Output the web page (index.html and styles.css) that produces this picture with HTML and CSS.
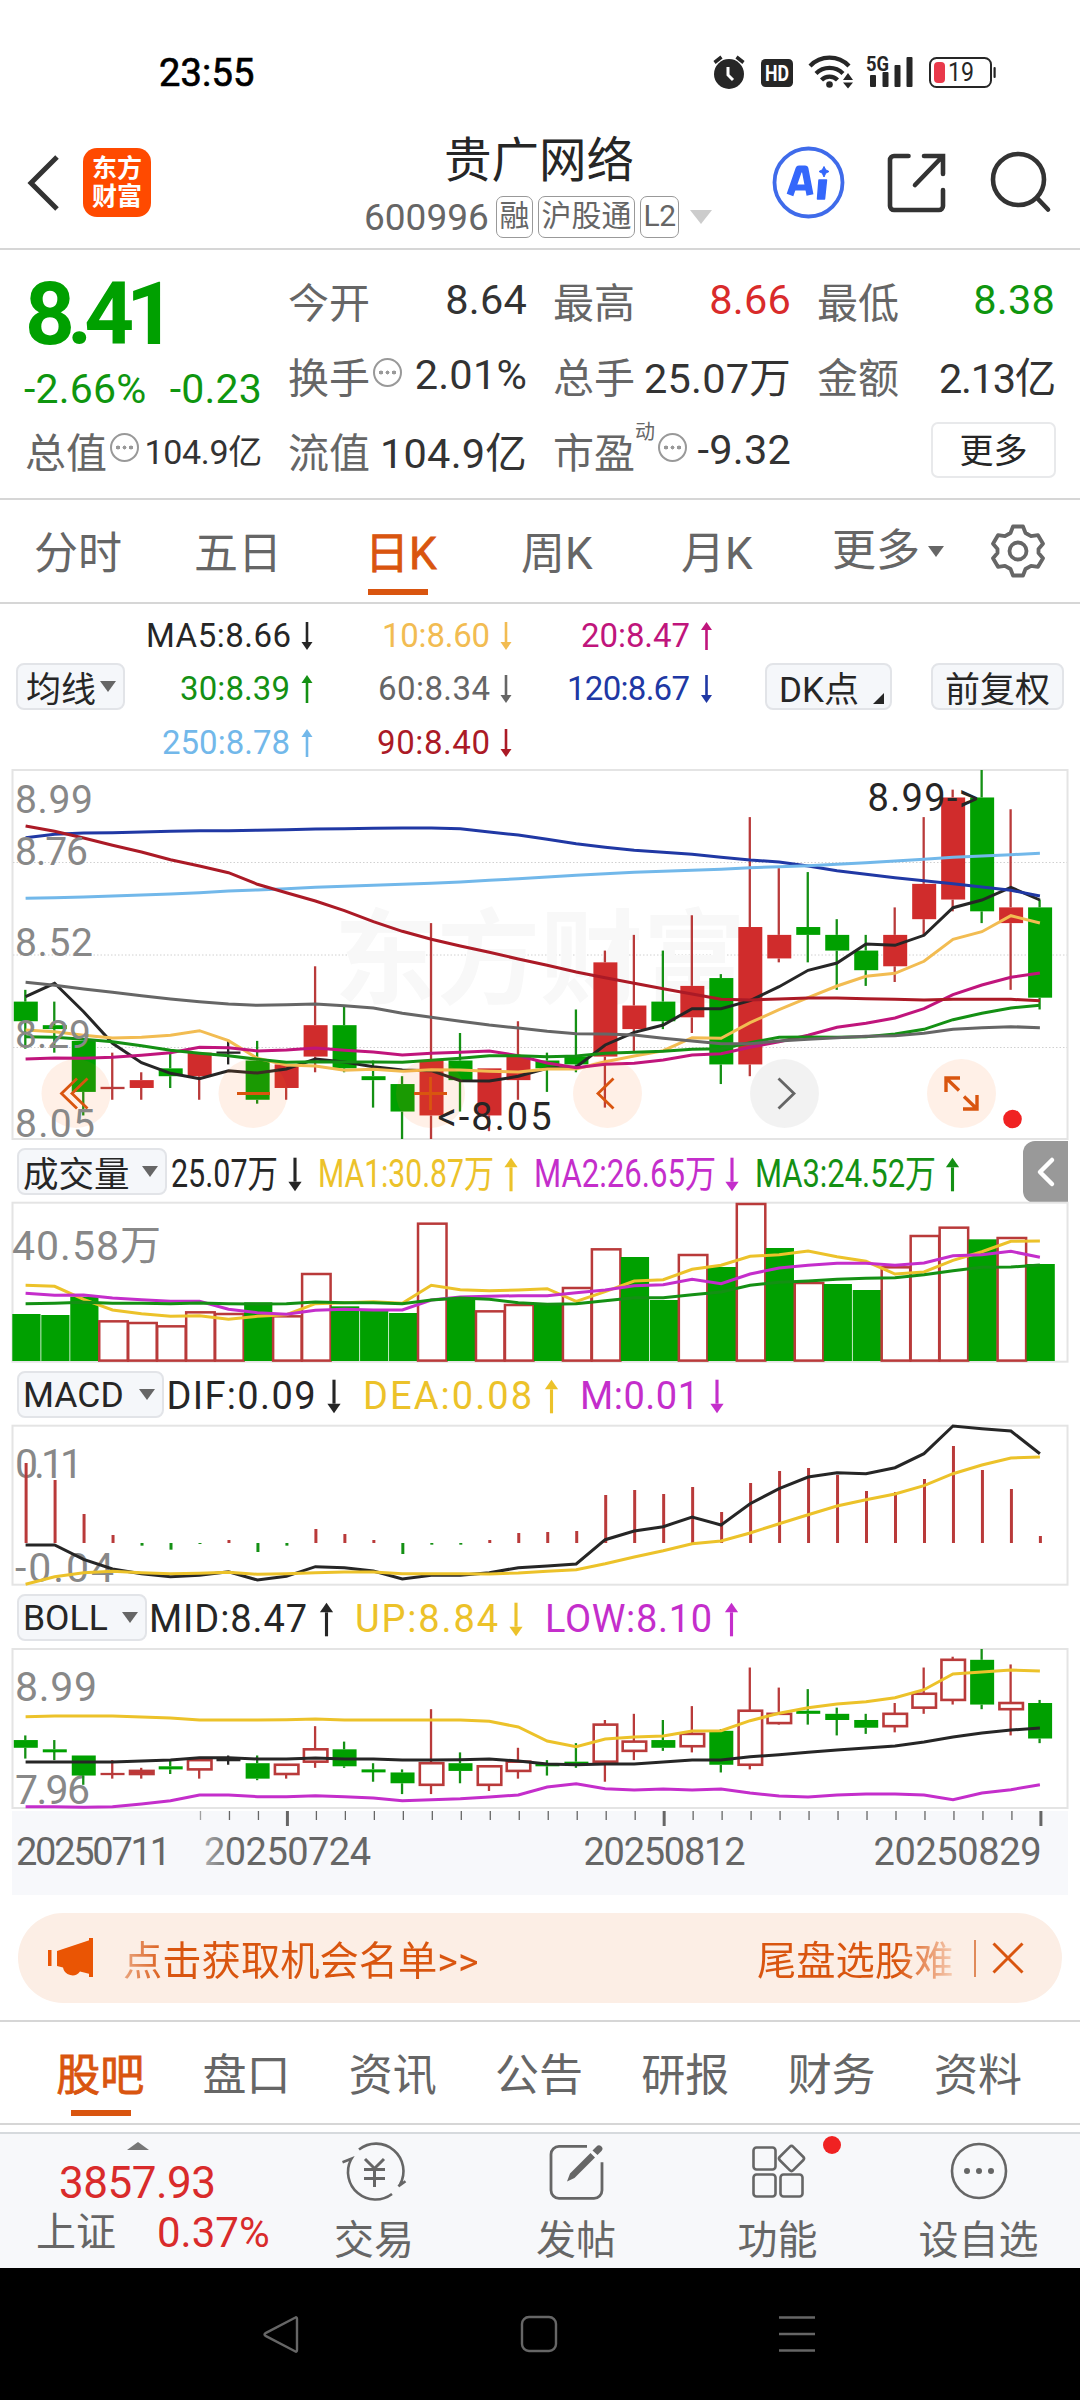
FILE: index.html
```html
<!DOCTYPE html>
<html lang="zh-CN">
<head>
<meta charset="utf-8">
<title>贵广网络 600996</title>
<link rel="stylesheet" href="styles.css">
</head>
<body>
<div class="statusbar">
  <span class="clock">23:55</span>
  <svg class="status-icons" width="290" height="44" viewBox="706 50 290 44">
    <g fill="#262626">
      <circle cx="729" cy="74" r="15"/>
      <path d="M714.500 62.500l7-5.500M743.500 62.500l-7-5.500" stroke="#262626" stroke-width="3.500"/>
      <path d="M728 67v8l5 5" fill="none" stroke="#fff" stroke-width="3"/>
      <rect x="761" y="59" width="32" height="28" rx="4.500"/>
      <text x="777" y="81" class="hd" text-anchor="middle" textLength="24" lengthAdjust="spacingAndGlyphs">HD</text>
      <g fill="none" stroke="#262626" stroke-width="4.200">
        <path d="M810 66a27 27 0 0 1 39 0"/><path d="M816 73.500a19 19 0 0 1 27 0"/><path d="M821.500 80a11 11 0 0 1 16 0"/>
      </g>
      <circle cx="829.500" cy="84.500" r="3.300"/>
      <path d="M843 80l5-7 5 7zM843 82.500h10l-5 6z"/>
      <text x="866" y="71" class="net" textLength="23" lengthAdjust="spacingAndGlyphs">5G</text>
      <rect x="870" y="75" width="6" height="12" rx="1"/><rect x="882.500" y="72" width="6" height="15" rx="1"/>
      <rect x="894.500" y="65" width="6" height="22" rx="1"/><rect x="906.500" y="57" width="6" height="30" rx="1"/>
      <rect x="930" y="58" width="61" height="29" rx="6.500" fill="none" stroke="#262626" stroke-width="2"/>
      <rect x="934" y="62" width="11" height="21" rx="4" fill="#e9394b"/>
      <rect x="993.500" y="67" width="2.200" height="11" rx="1"/>
      <text x="948" y="81" class="bat" textLength="26" lengthAdjust="spacingAndGlyphs">19</text>
    </g>
  </svg>
</div>

<header class="header">
  <svg class="back" width="34" height="60" viewBox="0 0 34 60"><path d="M30 4L4 30l26 26" fill="none" stroke="#333" stroke-width="5"/></svg>
  <div class="logo"><span>东方</span><span>财富</span></div>
  <div class="title">
    <h1>贵广网络</h1>
    <div class="code"><span class="num">600996</span><span class="tag t1">融</span><span class="tag t3">沪股通</span><span class="tag l2">L2</span><i class="caret"></i></div>
  </div>
  <svg class="head-icons" width="284" height="80" viewBox="770 143 284 80" fill="none">
    <circle cx="808.500" cy="182.500" r="34" stroke="#3f6bea" stroke-width="3.800"/>
    <path d="M790 195L799 169h6l5 26" stroke="#3467fb" stroke-width="7" stroke-linejoin="round"/><path d="M794 187.500h14" stroke="#3467fb" stroke-width="6"/>
    <path d="M819 180h7.500l-2 19h-7z" fill="#3467fb" stroke="#3467fb" stroke-width="1.500" stroke-linejoin="round"/>
    <path d="M824 166.500l1.700 3.300 3.300 1.700-3.300 1.700-1.700 3.800-1.700-3.800-3.300-1.700 3.300-1.700z" fill="#3467fb" stroke="#3467fb"/>
    <g stroke="#333" stroke-width="4.600" stroke-linecap="round">
      <path d="M908.500 156H894a4 4 0 0 0-4 4v46a4 4 0 0 0 4 4h45a4 4 0 0 0 4-4v-16"/>
      <path d="M924 156h19v18M942 157l-27 28"/>
      <circle cx="1018.500" cy="179.500" r="25.500"/><path d="M1038 199l10 10.500"/>
    </g>
  </svg>
</header>

<section class="quote">
  <div class="last">
    <div class="price">8.41</div>
    <div class="change"><span>-2.66%</span><span>-0.23</span></div>
  </div>
  <div class="cell"><span class="k">今开</span><b>8.64</b></div>
  <div class="cell"><span class="k">最高</span><b class="up">8.66</b></div>
  <div class="cell"><span class="k">最低</span><b class="down">8.38</b></div>
  <div class="cell"><span class="k">换手<i class="dots"></i></span><b>2.01%</b></div>
  <div class="cell"><span class="k">总手</span><b>25.07万</b></div>
  <div class="cell"><span class="k">金额</span><b class="tight">2.13亿</b></div>
  <div class="cell small"><span class="k">总值<i class="dots"></i></span><b>104.9亿</b></div>
  <div class="cell"><span class="k">流值</span><b>104.9亿</b></div>
  <div class="cell"><span class="k">市盈<sup>动</sup><i class="dots"></i></span><b>-9.32</b></div>
  <div class="cell end"><span class="more-btn">更多</span></div>
</section>

<nav class="periods">
  <span class="p1">分时</span><span class="p2">五日</span><span class="p3 on">日K</span><span class="p4">周K</span><span class="p5">月K</span><span class="p6">更多<i class="caret dark"></i></span>
  <svg class="gear" width="54" height="56" viewBox="-27 -28 54 56" fill="none" stroke="#666" stroke-width="3.800" stroke-linejoin="round">
    <path d="M-5-24.500h10l2.500 6.500 5.500 3.200 7-1 5 8.600-4.500 5.200v4l4.500 5.200-5 8.600-7-1L7.500 18 5 24.500H-5L-7.500 18l-5.500-3.200-7 1-5-8.600 4.500-5.200v-4L-25-7.200l5-8.600 7 1 5.500-3.200z"/><circle r="8.500"/>
  </svg>
</nav>

<section class="legend">
  <span class="chip avg">均线<i class="caret dark"></i></span>
  <svg class="ma-legend" width="580" height="165" viewBox="140 604 580 165">
    <defs>
      <g id="dn"><path d="M0-14v20" stroke="currentColor" stroke-width="2.600"/><path d="M-5.500 6h11L0 14z" fill="currentColor"/></g>
      <g id="ua"><path d="M0 14V-6" stroke="currentColor" stroke-width="2.600"/><path d="M-5.500-6h11L0-14z" fill="currentColor"/></g>
    </defs>
    <g class="t33">
      <g class="c-ink"><text x="146" y="647" textLength="145">MA5:8.66</text><use href="#dn" x="307" y="636"/></g>
      <g class="c-orange"><text x="382" y="647" textLength="108">10:8.60</text><use href="#dn" x="506" y="636"/></g>
      <g class="c-pink"><text x="581" y="647" textLength="109">20:8.47</text><use href="#ua" x="706.500" y="636"/></g>
      <g class="c-green"><text x="180" y="700" textLength="110">30:8.39</text><use href="#ua" x="307" y="689"/></g>
      <g class="c-gray"><text x="378" y="700" textLength="112">60:8.34</text><use href="#dn" x="506" y="689"/></g>
      <g class="c-blue"><text x="567" y="700" textLength="123">120:8.67</text><use href="#dn" x="706.500" y="689"/></g>
      <g class="c-sky"><text x="162" y="754" textLength="128">250:8.78</text><use href="#ua" x="307" y="743"/></g>
      <g class="c-red"><text x="377" y="754" textLength="113">90:8.40</text><use href="#dn" x="506" y="743"/></g>
    </g>
  </svg>
  <span class="chip dk">DK点<i class="corner"></i></span>
  <span class="chip">前复权</span>
</section>

<svg class="plot" width="1080" height="371" viewBox="0 9 1080 371">
  <rect x="12.500" y="10" width="1055" height="369" class="frame"/>
  <path d="M13 102.500H1067M13 195H1067M13 287.500H1067" class="grid"/>
  <text x="334" y="236" class="wm" textLength="412">东方财富</text>
  <g id="k"></g>
  <g class="fab">
    <circle cx="76" cy="333.500" r="34.500"/><circle cx="253" cy="333.500" r="34.500"/><circle cx="430.500" cy="333.500" r="34.500"/>
    <circle cx="607.500" cy="333.500" r="34.500"/><circle cx="784.500" cy="333.500" r="34.500" class="g"/><circle cx="961.500" cy="333.500" r="34.500"/>
  </g>
  <g fill="none" stroke="#d9550f" stroke-width="2.800">
    <path d="M77 318.500L61.500 333.500l15.500 15M87.500 318.500L72 333.500l15.500 15M237 333.500h33M414 333.500h33M430.500 317v33M613.500 318.500L598 333.500l15.500 15"/>
    <path d="M778.500 318.500L794 333.500l-15.500 15" stroke="#666"/>
    <path d="M946 332v-14h14M946 318l13 12.500M963 349h14v-14M977 349l-13-12.500" stroke-width="3.400"/>
  </g>
  <circle cx="1012.500" cy="359" r="9.300" fill="#f02222"/>
  <g class="axis">
    <text x="15" y="53" textLength="78">8.99</text><text x="15" y="104.500" textLength="73">8.76</text>
    <text x="15" y="195.500" textLength="78">8.52</text><text x="15" y="288" textLength="76">8.29</text><text x="15" y="376.500" textLength="80">8.05</text>
  </g>
  <g class="t38 c-ink"><text x="867.500" y="51" textLength="111">8.99-&gt;</text><text x="437.500" y="370" textLength="114">&lt;-8.05</text></g>
</svg>

<div class="ph">
  <span class="chip w1">成交量<i class="caret dark"></i></span>
  <svg width="854" height="62" viewBox="169 1140 854 62">
    <g class="t38">
      <g class="c-ink"><text x="171" y="1187" textLength="107" lengthAdjust="spacingAndGlyphs">25.07万</text><use href="#dn" transform="translate(295 1174.500) scale(1.200)"/></g>
      <g class="c-yellow"><text x="318" y="1187" textLength="176" lengthAdjust="spacingAndGlyphs">MA1:30.87万</text><use href="#ua" transform="translate(511 1174.500) scale(1.200)"/></g>
      <g class="c-violet"><text x="534" y="1187" textLength="182" lengthAdjust="spacingAndGlyphs">MA2:26.65万</text><use href="#dn" transform="translate(732 1174.500) scale(1.200)"/></g>
      <g class="c-green"><text x="755" y="1187" textLength="181" lengthAdjust="spacingAndGlyphs">MA3:24.52万</text><use href="#ua" transform="translate(952.500 1174.500) scale(1.200)"/></g>
    </g>
  </svg>
  <div class="drawer"><svg width="20" height="32" viewBox="0 0 20 32"><path d="M16 4L4 16l12 12" fill="none" stroke="#fff" stroke-width="4.500" stroke-linecap="round" stroke-linejoin="round"/></svg></div>
</div>
<svg class="plot" width="1080" height="161" viewBox="0 62 1080 161">
  <rect x="12.500" y="62.700" width="1055" height="159" class="frame"/>
  <g id="vol"></g>
  <text x="12" y="120" class="ax40" textLength="149">40.58万</text>
</svg>

<div class="ph">
  <span class="chip w2">MACD<i class="caret dark"></i></span>
  <svg width="857" height="62" viewBox="166 1363 857 62">
    <g class="t38">
      <g class="c-ink"><text x="166.500" y="1408.500" textLength="149">DIF:0.09</text><use href="#dn" transform="translate(334 1396.500) scale(1.200)"/></g>
      <g class="c-yellow"><text x="363" y="1408.500" textLength="169">DEA:0.08</text><use href="#ua" transform="translate(551.500 1396.500) scale(1.200)"/></g>
      <g class="c-violet"><text x="580" y="1408.500" textLength="119">M:0.01</text><use href="#dn" transform="translate(717 1396.500) scale(1.200)"/></g>
    </g>
  </svg>
</div>
<svg class="plot" width="1080" height="161" viewBox="0 285 1080 161">
  <rect x="12.500" y="285.700" width="1055" height="159" class="frame"/>
  <g class="ax40"><text x="15" y="337.500" textLength="68">0.11</text><text x="15" y="441.500" textLength="99">-0.04</text></g>
  <g id="macd"></g>
</svg>

<div class="ph">
  <span class="chip w3">BOLL<i class="caret dark"></i></span>
  <svg width="874" height="62" viewBox="149 1586 874 62">
    <g class="t38">
      <g class="c-ink"><text x="149" y="1632" textLength="158">MID:8.47</text><use href="#ua" transform="translate(326.500 1619.500) scale(1.200)"/></g>
      <g class="c-yellow"><text x="355" y="1632" textLength="143">UP:8.84</text><use href="#dn" transform="translate(516 1619.500) scale(1.200)"/></g>
      <g class="c-violet"><text x="545" y="1632" textLength="167">LOW:8.10</text><use href="#ua" transform="translate(731.500 1619.500) scale(1.200)"/></g>
    </g>
  </svg>
</div>
<svg class="plot" width="1080" height="162" viewBox="0 58 1080 162">
  <rect x="12.500" y="59" width="1055" height="159" class="frame"/>
  <g class="ax40"><text x="15" y="110.500" textLength="82">8.99</text><text x="15" y="214" textLength="75">7.96</text></g>
  <g id="boll"></g>
</svg>

<svg class="plot" width="1080" height="85" viewBox="0 0 1080 85">
  <defs>
    <linearGradient id="f" gradientUnits="userSpaceOnUse" x1="200" x2="232"><stop offset="0" stop-color="#666" stop-opacity=".45"/><stop offset="1" stop-color="#666"/></linearGradient>
  </defs>
  <rect x="12" y="1" width="1056" height="84" fill="#f7f8fb"/>
  <g id="ticks"></g>
  <g class="t38"><g class="c-gray"><text x="16" y="55" textLength="155">20250711</text><text x="204" y="55" textLength="167" fill="url(#f)">20250724</text><text x="583.500" y="55" textLength="162">20250812</text><text x="873.500" y="55" textLength="168">20250829</text></g></g>
</svg>

<div class="banner">
  <svg width="46" height="42" viewBox="48 1937 46 42" fill="#ea5504"><rect x="48" y="1950" width="3.500" height="16"/><path d="M57 1951l33-11v34l-10-2.500a9.500 9.500 0 0 1-17-4l-6-1.500z"/><rect x="89" y="1938" width="4" height="39"/></svg>
  <span class="msg">点击获取机会名单&gt;&gt;</span>
  <span class="msg tail">尾盘选股难</span>
  <i class="bar"></i>
  <svg width="32" height="32" viewBox="0 0 32 32"><path d="M1.500 1.500l29 29M30.500 1.500l-29 29" stroke="#d9550f" stroke-width="3"/></svg>
</div>

<nav class="tabs">
  <span class="on">股吧</span><span>盘口</span><span>资讯</span><span>公告</span><span>研报</span><span>财务</span><span>资料</span>
</nav>

<footer class="actions">
  <div class="index">
    <i class="tri-up"></i>
    <div class="pts">3857.93</div>
    <div class="idx"><span>上证</span><b>0.37%</b></div>
  </div>
  <div class="act">
    <svg width="70" height="60" viewBox="340 2141 70 60" fill="none" stroke="#666" stroke-width="2.600">
      <path d="M360 2149.500a27.500 27.500 0 0 1 41 35l-1.500 1.800 7-5M393 2194a27.500 27.500 0 0 1-41-34.500l.5-.8-9 3.500"/>
      <path d="M366 2159l9.500 9.500 9.500-9.500M365 2169.500h21M365 2178.500h21M375.500 2168.500v18.500" stroke-width="3"/>
    </svg><span>交易</span></div>
  <div class="act">
    <svg width="60" height="60" viewBox="547 2141 60 60" fill="none" stroke="#666" stroke-width="2.800">
      <path d="M588 2146.300h-28a8 8 0 0 0-8 8v36a8 8 0 0 0 8 8h35a8 8 0 0 0 8-8v-28"/>
      <path d="M568 2181.500l3-8 20.500-20.500 4.500 4.500-20.500 20.500zM593.500 2150.500l4-4a3.300 3.300 0 0 1 5 4.500l-4 4z" fill="#666" stroke="none"/>
    </svg><span>发帖</span></div>
  <div class="act">
    <svg width="60" height="60" viewBox="748 2141 60 60" fill="none" stroke="#666" stroke-width="2.600">
      <rect x="753.500" y="2147.500" width="22" height="22" rx="3"/><rect x="753.500" y="2174.500" width="22" height="22" rx="3"/><rect x="780.500" y="2174.500" width="22" height="22" rx="3"/>
      <rect x="782" y="2149" width="19" height="19" rx="2.500" transform="rotate(45 791.500 2158.500)"/>
    </svg><i class="badge"></i><span>功能</span></div>
  <div class="act">
    <svg width="60" height="60" viewBox="-30 -30 60 60"><circle r="27" fill="none" stroke="#666" stroke-width="2.600"/><circle cx="-12" r="3" fill="#666"/><circle r="3" fill="#666"/><circle cx="12" r="3" fill="#666"/></svg><span>设自选</span></div>
</footer>
<div class="sysnav">
  <svg width="560" height="40" viewBox="260 2314 560 40" fill="none" stroke="#666" stroke-width="2.400">
    <path d="M297 2319v31q0 2.500-2 1.300l-29-15.200q-3-1.600 0-3.200l29-15.200q2-1.200 2 1.300z" stroke-linejoin="round"/>
    <rect x="522" y="2317" width="34" height="34" rx="7"/><path d="M779 2317.500h36M779 2334h36M779 2350.500h36"/>
  </svg>
</div>
<script src="chart.js"></script>
</body>
</html>
```
FILE: styles.css
```css
* { box-sizing: border-box; }
body {
  margin: 0; width: 1080px; height: 2400px; overflow: hidden; background: #fff; color: #262626;
  font-family: Roboto, "Noto Sans CJK SC", sans-serif;
}
svg, i { display: block; flex: none; }
svg { overflow: visible; }
b, h1 { font-weight: 400; margin: 0; }
text { white-space: pre; }

.statusbar { height: 110px; padding: 50px 84px 0 159px; display: flex; justify-content: space-between; }
.clock { font-size: 38px; line-height: 46px; color: #000; letter-spacing: 0.2px; -webkit-text-stroke: 0.7px #000; }
.hd { font-size: 22px; font-weight: 700; fill: #fff; }
.net { font-size: 20px; font-weight: 700; }
.bat { font-size: 25px; }

.header { height: 140px; border-bottom: 2px solid #d6d6d6; display: flex; padding-left: 27px; }
.back { margin-top: 43px; }
.logo {
  width: 68px; height: 69px; margin: 38px 0 0 22px; border-radius: 14px; background: #ff4a00; color: #fff;
  display: flex; flex-direction: column; align-items: center; justify-content: center;
  font-size: 25px; font-weight: 700; line-height: 28px;
}
.title { width: 550px; margin-left: 114px; }
.title h1 { font-size: 47.5px; line-height: 60px; margin: 21px 0 0 79px; padding-left: 100px; width: 300px; white-space: nowrap; }
.code { display: flex; align-items: center; height: 42px; padding-left: 99px; margin-top: 5px; color: #666; }
.num { font-size: 37px; letter-spacing: 0; margin-right: 5px; width: 127px; }
.tag { height: 42px; line-height: 38px; border: 1.500px solid #999; border-radius: 7px; font-size: 30px; white-space: nowrap; display: flex; justify-content: center; flex: none; }
.t1 { width: 37px; margin-right: 5px; }
.t3 { width: 97px; margin-right: 5px; }
.tag.l2 { width: 39px; font-size: 30px; letter-spacing: -0.5px; }
.caret { width: 0; height: 0; border: 11px solid transparent; border-top: 14px solid #ccc; border-bottom: 0; margin-left: 11px; }
.caret.dark { border-width: 11px 8px 0; border-top-color: #666; margin: 0; }
.head-icons { margin: 33px 0 0 -45px; }

.quote {
  height: 250px; border-bottom: 2px solid #d6d6d6; padding: 15px 25px 0;
  display: grid; grid-template-columns: 237px 239px 238px 238px; grid-template-rows: 75px 75px 75px; column-gap: 26px;
}
.last { grid-row: 1 / 3; color: #00a000; }
.price { font-size: 87px; font-weight: 700; line-height: 90px; padding-top: 4px; letter-spacing: -8px; }
.change { display: flex; justify-content: space-between; font-size: 41px; line-height: 50px; margin-top: 5px; margin-left: -1px; letter-spacing: 0.2px; color: #0f960f; }
.cell { display: flex; justify-content: space-between; align-items: center; height: 71px; margin-top: -1px; font-size: 41px; color: #333; white-space: nowrap; }
.cell b { letter-spacing: 0.2px; font-size: 41.5px; }
.cell.small b { font-size: 34px; letter-spacing: -0.3px; }
.cell .tight { letter-spacing: -1.3px; }
.cell .up { color: #d92b2b; }
.cell .down { color: #0f960f; }
.cell.end { justify-content: flex-end; }
.k { color: #666; display: flex; align-items: center; }
.k sup { font-size: 20px; align-self: flex-start; line-height: 20px; margin: 2px 0 0; }
.dots {
  width: 29px; height: 29px; border-radius: 50%; border: 2px solid #999; margin: -5px 0 0 3px;
  background: radial-gradient(circle at 6px 12.500px, #999 1.800px, transparent 2.200px), radial-gradient(circle at 12.500px 12.500px, #999 1.800px, transparent 2.200px), radial-gradient(circle at 19px 12.500px, #999 1.800px, transparent 2.200px);
}
.more-btn { width: 125px; height: 56px; border: 2px solid #e8e9eb; border-radius: 7px; text-align: center; font-size: 34px; line-height: 54px; color: #262626; margin: 0 -1px 0 0; }

.periods { height: 104px; border-bottom: 2px solid #d6d6d6; display: flex; font-size: 44px; line-height: 108px; color: #666; padding-left: 34px; white-space: nowrap; }
.p1 { width: 160px; } .p2 { width: 171px; } .p3 { width: 156px; } .p4 { width: 160px; } .p5 { width: 151px; }
.p6 { width: 159px; display: flex; align-items: center; gap: 8px; }
.periods .on { color: #d9550f; -webkit-text-stroke: 0.8px #d9550f; background: linear-gradient(#d9550f, #d9550f) 3px 89px / 60px 6px no-repeat; }
.gear { margin-top: 23px; }

.legend { height: 165px; display: flex; align-items: center; padding-left: 16px; }
.chip {
  height: 47px; display: flex; align-items: center; justify-content: space-between; flex: none; padding: 0 13px 0 13px;
  background: #f5f7fa; border: 2px solid #e2e4e8; border-radius: 8px; font-size: 35px; white-space: nowrap;
}
.avg { width: 109px; padding: 0 7px 0 8px; }
.ma-legend { margin-left: 15px; }
.dk { width: 127px; margin: 0 39px 0 45px; padding: 0 6px 0 12px; }
.corner { width: 0; height: 0; border-left: 11px solid transparent; border-bottom: 11px solid #262626; margin-top: 24px; }
.legend .chip:last-child { width: 133px; justify-content: center; padding: 0; }

.t33 { font-size: 33px; } .t38 { font-size: 38px; }
.c-ink { color: #262626; fill: #262626; } .c-orange { color: #f2bc52; fill: #f2bc52; } .c-pink { color: #c0157c; fill: #c0157c; }
.c-green { color: #149014; fill: #149014; } .c-gray { color: #666; fill: #666; } .c-blue { color: #2038a4; fill: #2038a4; }
.c-sky { color: #72b8ea; fill: #72b8ea; } .c-red { color: #ab1a26; fill: #ab1a26; }
.c-yellow { color: #ecc22a; fill: #ecc22a; } .c-violet { color: #c42ecb; fill: #c42ecb; }

.frame { fill: none; stroke: #e4e4e4; stroke-width: 2px; }
.grid { stroke: #d0d0d0; stroke-width: 1px; stroke-dasharray: 1.500 2; }
.wm { font-size: 103px; font-weight: 700; fill: #f8f8f8; }
.axis { font-size: 39px; fill: #888; }
.ax40 { font-size: 41px; fill: #888; }
.fab { fill: #ff6a10; fill-opacity: .1; }
.fab .g { fill: #000; fill-opacity: .05; }
.line { fill: none; stroke-width: 3px; }

.ph { display: flex; height: 62px; padding-left: 17px; }
.ph .chip { margin: 8px 2px 0 0; padding: 0 7px 0 4px; height: 47px; font-size: 35.5px; }
.w1 { width: 150px; } .w2 { width: 147px; } .w3 { width: 130px; }
.drawer { width: 45px; height: 62px; margin-top: 1px; background: #999; border-radius: 12px 0 0 12px; display: flex; align-items: center; justify-content: center; }

.banner { margin: 18px 18px 17px; height: 90px; border-radius: 45px; background: #fceee5; display: flex; align-items: center; padding-left: 30px; }
.msg { font-size: 39.3px; margin: -2px 0 0 29px; white-space: nowrap; color: transparent; background: linear-gradient(90deg, #e9a57f, #d9550f 45px); -webkit-background-clip: text; background-clip: text; width: 358px; }
.tail { width: 197px; margin-left: 276px; background: linear-gradient(90deg, #d9550f 140px, #f6cdb5 197px); -webkit-background-clip: text; background-clip: text; }
.bar { width: 2px; height: 37px; background: #e08a5a; margin: 0 16px 0 20px; }

.tabs { height: 105px; border-top: 2px solid #d6d6d6; border-bottom: 2px solid #d6d6d6; display: grid; grid-template-columns: repeat(7, 146.300px); padding-left: 27px; font-size: 44px; line-height: 109px; color: #666; text-align: center; }
.tabs .on { color: #d9550f; -webkit-text-stroke: 0.8px #d9550f; background: linear-gradient(#d9550f, #d9550f) 44px 88px / 60px 6px no-repeat; }

.actions { margin-top: 7px; height: 136px; border-top: 2px solid #d6dadd; background: #f7f8fa; display: grid; grid-template-columns: 274px 202px 202px 201px 201px; color: #666; margin-right: 0; }
.index { padding-left: 36px; }
.tri-up { width: 0; height: 0; border: 11px solid transparent; border-bottom: 8px solid #777; border-top: 0; margin: 8px 0 0 91px; }
.pts { font-size: 44px; line-height: 50px; color: #d92b2b; letter-spacing: -0.5px; padding-left: 23px; margin-top: 8px; }
.idx { display: flex; font-size: 40px; line-height: 50px; gap: 41px; }
.idx b { color: #d92b2b; letter-spacing: 0; font-size: 42px; }
.act { position: relative; display: flex; flex-direction: column; align-items: center; padding-top: 7px; font-size: 40px; right: 1px; }
.act span { line-height: 48px; margin-top: 16px; }
.badge { position: absolute; left: 146px; top: 2px; width: 18px; height: 18px; border-radius: 50%; background: #f02222; }
.sysnav { height: 132px; background: #000; padding: 46px 0 0 260px; }
```
FILE: chart.js
```js
// One row per trading day: direction, then high / body top / body bottom / low in cents below 8.99.
const days = `g 56 59 64 71|g 59 65 66 72|g 69 69 82 88|r 72 81 81 84|r 77 79 81 84|g 72 76 78 81|r 72 72 78 84|k 69 72 72 75|g 69 74 84 85
r 75 75 81 84|r 50 65 73 77|g 60 65 76 77|g 74 78 79 86|g 78 80 87 94|r 39 74 88 94|g 67 74 79 87|r 76 76 88 92|r 64 73 79 84
g 72 74 76 82|g 61 73 75 77|r 46 49 73 86|r 42 60 66 72|g 46 59 64 66|r 37 55 63 67|g 52 53 75 80|r 12 40 75 78|r 25 42 48 49
g 26 40 42 49|g 38 42 46 56|g 42 46 51 55|r 35 42 50 54|r 12 29 38 42|r 5 7 33 36|g 0 7 36 39|r 10 35 39 56|g 33 35 58 61`
  .split(/[|\n]/).map(r => { const [c, ...n] = r.split(' '); return { c, n: n.map(Number) }; });

const STEP = 28.98, X0 = 25.600;
const COLORS = { r: '#b93a3a', g: '#149014', k: '#262626' };
const x = i => X0 + STEP * i;
const put = (id, html) => { document.getElementById(id).innerHTML += html; };

// Series values are in thirds of a pixel on each panel's vertical axis.
function line(id, color, values, dx = 0) {
  const pts = values.split(',').map((v, i) => `${(x(i) + dx).toFixed(1)},${(v / 3).toFixed(1)}`).join(' ');
  put(id, `<polyline class="line" stroke="${color}" points="${pts}"/>`);
}

function candles(id, top, cent, hollow) {
  put(id, days.map(({ c, n }, i) => {
    const [h, t, b, l] = n.map(v => (top + v * cent) / 3), cx = x(i);
    const wick = (a, z) => `<path d="M${cx - 0.3} ${a}V${z}" stroke="${COLORS[c]}" stroke-width="2.300"/>`;
    let body;
    if (n[1] === n[2]) body = `<path d="M${cx - 12} ${t}h24" stroke="${COLORS[c]}" stroke-width="2.300"/>`;
    else if (c === 'r' && hollow) body = `<rect x="${cx - 11.500}" y="${t}" width="23.500" height="${b - t}" fill="${n[2] - n[1] < 3 ? '#d02c2c' : '#fff'}" stroke="#b93a3a" stroke-width="2.600"/>`;
    else body = `<rect x="${cx - 11.800}" y="${t}" width="24" height="${Math.max(b - t, 3)}" fill="${c === 'r' ? '#d02c2c' : '#00a000'}"/>`;
    return wick(h, t) + wick(b, l) + body;
  }).join(''));
}

candles('k', 30, 11.777, false);
line('k', '#262626', '710,670,755,850,908,940,956,932,939,927,897,906,920,930,932,962,963,949,925,921,855,817,795,746,746,722,680,631,609,552,556,526,443,420,382,420');
line('k', '#f2bc52', '810,815,826,834,832,826,812,842,895,915,918,931,928,934,929,930,934,936,927,927,905,888,872,833,835,788,749,713,678,649,640,604,538,515,467,489');
line('k', '#c0157c', '897,894,895,892,886,878,862,863,873,870,864,871,876,885,880,877,873,887,909,923,913,910,900,885,881,862,845,826,802,790,774,746,704,675,652,639');
line('k', '#149014', '830,832,838,845,857,871,880,887,898,907,905,906,906,907,901,895,887,887,890,888,880,877,874,868,866,848,832,831,832,830,822,808,779,760,744,736');
line('k', '#666', '667,676,687,697,707,717,725,732,736,734,732,737,744,760,772,784,795,804,814,821,822,825,835,843,851,851,843,838,833,829,827,820,808,803,800,803');
line('k', '#2038a4', '233,223,219,218,216,214,212,212,211,209,207,206,205,204,204,206,216,225,238,251,262,271,277,283,292,300,306,318,332,343,353,362,371,381,391,408');
line('k', '#72b8ea', '415,413,411,408,405,402,398,393,390,386,382,379,376,373,370,366,361,356,351,346,341,337,334,331,328,323,320,317,313,308,303,298,292,288,284,280');
line('k', '#ab1a26', '198,214,234,256,276,299,318,338,373,398,423,452,485,514,538,558,577,597,616,636,653,670,686,702,718,720,717,714,714,716,718,720,718,718,718,722');

'g522 g525 g470 r541 r546 r556 r514 r519 g487 r526 r399 g499 g510 g519 r248 g474 r511 r492 g495 r441 r325 g351 g480 r342 g381 r189 g324 r426 g432 g450 r379 r285 r260 g298 r291 g372'
  .split(' ').forEach((s, i) => {
    const left = 12.300 + STEP * i, y = s.slice(1) / 3;
    put('vol', s[0] === 'g'
      ? `<rect x="${left}" y="${y}" width="28.200" height="${221 - y}" fill="#00a000"/>`
      : `<rect x="${left}" y="${y + 1}" width="28.500" height="${219.600 - y}" fill="#fff" stroke="#b93a3a" stroke-width="2.500"/>`);
  });
line('vol', '#ecc22a', '436,439,478,510,521,529,527,538,529,524,491,488,485,490,436,449,452,450,446,484,455,423,419,388,376,349,344,333,350,364,402,396,361,335,304,303');
line('vol', '#c42ecb', '460,466,465,474,479,484,484,508,518,523,511,508,510,510,480,471,469,467,467,458,450,437,434,418,431,402,384,376,370,370,376,369,347,344,334,352');
line('vol', '#149014', '491,490,487,490,490,491,489,491,492,491,486,488,488,491,480,474,478,488,493,491,482,473,473,464,456,436,427,423,418,415,413,404,392,382,381,375');

'969 1020 1122 1185 1217 1229 1212 1200 1236 1217 1167 1182 1200 1242 1214 1214 1200 1179 1176 1173 1065 1050 1062 1041 1116 1029 993 984 1005 1053 1056 1017 918 990 1047 1188'
  .split(' ').forEach((v, i) => put('macd', `<path d="M${x(i) + 0.500} 403V${v / 3}" stroke="${v > 1209 ? '#149014' : '#b93a3a'}" stroke-width="3"/>`));
line('macd', '#262626', '1215,1215,1258,1287,1301,1310,1306,1295,1320,1309,1280,1283,1293,1317,1306,1306,1298,1283,1278,1272,1199,1173,1160,1131,1155,1091,1046,1011,998,1001,983,941,858,866,873,941');
line('macd', '#ecc22a', '1333,1310,1298,1294,1298,1301,1300,1297,1303,1301,1298,1296,1296,1301,1301,1301,1302,1299,1294,1289,1271,1251,1232,1211,1203,1179,1151,1124,1098,1079,1062,1037,1001,975,954,951');

candles('boll', 177, 4.630, true);
line('boll', '#ecc22a', '380,378,378,378,381,384,390,390,390,389,387,390,390,390,390,390,394,411,453,470,447,441,438,423,422,392,370,353,342,335,323,299,252,246,240,243');
line('boll', '#262626', '516,516,516,516,513,510,503,503,507,507,504,507,507,510,510,509,507,513,522,524,522,522,516,510,510,500,494,487,480,474,468,456,441,429,420,414');
line('boll', '#c42ecb', '650,650,652,650,642,632,615,615,620,620,617,620,624,632,629,626,621,615,591,581,596,600,597,600,597,609,618,621,615,612,612,615,629,609,599,584');

for (let i = 6; i < 36; i++) {
  const major = [9, 22, 35].includes(i);
  put('ticks', `<path d="M${x(i) + 1} 1v${major ? 15 : 9}" stroke="#666" stroke-opacity="${i === 6 ? 0.600 : 1}" stroke-width="${major ? 3 : 1.300}"/>`);
}
```
